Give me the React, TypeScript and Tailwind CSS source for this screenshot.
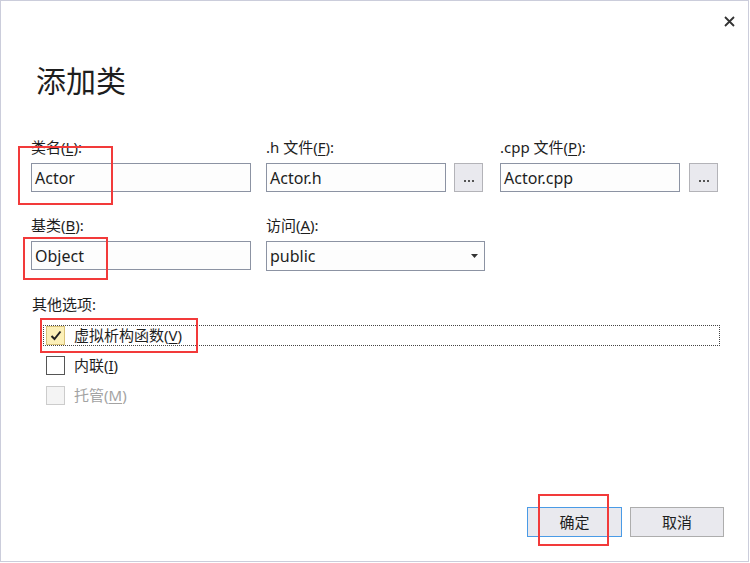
import React from "react";

const font = { fontFamily: '"Noto Sans", "Noto Sans CJK SC", sans-serif' };

function Label({ children }: { children: React.ReactNode }) {
  return <div className="h-[20px] leading-[20px] text-[15px] text-[#1e1e1e] mb-[6px] whitespace-nowrap">{children}</div>;
}

function Input({ value, w }: { value: string; w: string }) {
  return (
    <div className={`${w} h-[29px] border border-[#8c93a3] bg-[#fdfdfd] pl-[3px] flex items-center text-[16px] text-[#1e1e1e] leading-none`}>
      {value}
    </div>
  );
}

function Browse() {
  return (
    <div className="w-[29px] h-[29px] border border-[#b3b3b8] bg-[#e9e9ee] flex items-end justify-center pb-[9px] gap-[2px]">
      <span className="w-[2px] h-[2px] bg-[#555]" />
      <span className="w-[2px] h-[2px] bg-[#555]" />
      <span className="w-[2px] h-[2px] bg-[#555]" />
    </div>
  );
}

function U({ c }: { c: string }) {
  return <span className="underline underline-offset-2">{c}</span>;
}

export default function App() {
  return (
    <div className="w-[750px] h-[563px] bg-white" style={font}>
      <div className="relative w-[749px] h-[562px] border border-[#cbcddb] bg-white flex flex-col">
        <div className="flex justify-end pr-[13px] pt-[15px]">
          <svg width="11" height="11" viewBox="0 0 11 11">
            <path d="M1 1 L10 10 M10 1 L1 10" stroke="#333" strokeWidth="1.8" />
          </svg>
        </div>
        <div className="mt-[34px] pl-[35px] text-[30px] leading-[40px] text-[#1e1e1e]">添加类</div>

        <div className="mt-[36px] pl-[30px] grid grid-cols-[235px_234px_auto] gap-y-[23px]">
          <div>
            <Label>类名(<U c="L" />):</Label>
            <Input value="Actor" w="w-[220px]" />
          </div>
          <div>
            <Label>.h 文件(<U c="F" />):</Label>
            <div className="flex gap-[8px]">
              <Input value="Actor.h" w="w-[180px]" />
              <Browse />
            </div>
          </div>
          <div>
            <Label>.cpp 文件(<U c="P" />):</Label>
            <div className="flex gap-[9px]">
              <Input value="Actor.cpp" w="w-[180px]" />
              <Browse />
            </div>
          </div>
          <div>
            <Label>基类(<U c="B" />):</Label>
            <Input value="Object" w="w-[220px]" />
          </div>
          <div>
            <Label>访问(<U c="A" />):</Label>
            <div className="w-[219px] h-[30px] border border-[#8c93a3] bg-[#fdfdfd] pl-[3px] pr-[6px] flex items-center justify-between text-[16px] text-[#1e1e1e] leading-none">
              <span>public</span>
              <svg width="7" height="4" viewBox="0 0 7 4">
                <path d="M0 0 H7 L3.5 4 Z" fill="#333" />
              </svg>
            </div>
          </div>
          <div />
        </div>

        <div className="mt-[23px] pl-[31px] h-[20px] leading-[20px] text-[15px] text-[#1e1e1e]">其他选项:</div>

        <div className="mt-[11px] pl-[42px] flex flex-col gap-[9px]">
          <div className="w-[677px] h-[21px] border border-dotted border-[#444] pl-[2px] flex items-center">
            <div className="w-[19px] h-[19px] border border-[#d9c27a] bg-[#fcf0b8] flex items-center justify-center">
              <svg width="12" height="11" viewBox="0 0 12 11">
                <path d="M1.5 6 L4.5 9 L10.5 1.5" stroke="#222" strokeWidth="2" fill="none" />
              </svg>
            </div>
            <span className="ml-[9px] text-[15px] leading-none text-[#1e1e1e]">虚拟析构函数(<U c="V" />)</span>
          </div>
          <div className="w-[677px] h-[21px] border border-transparent pl-[2px] flex items-center">
            <div className="w-[19px] h-[19px] border border-[#555] bg-white" />
            <span className="ml-[9px] text-[15px] leading-none text-[#1e1e1e]">内联(<U c="I" />)</span>
          </div>
          <div className="w-[677px] h-[21px] border border-transparent pl-[2px] flex items-center">
            <div className="w-[19px] h-[19px] border border-[#cccccc] bg-[#f4f4f4]" />
            <span className="ml-[9px] text-[15px] leading-none text-[#a3a3a3]">托管(<U c="M" />)</span>
          </div>
        </div>

        <div className="mt-auto flex justify-end gap-[8px] pr-[24px] pb-[24px]">
          <div className="w-[95px] h-[30px] border border-[#4a9be6] bg-[#e9e9ee] flex items-center justify-center text-[15px] text-[#1e1e1e]">确定</div>
          <div className="w-[94px] h-[30px] border border-[#adadad] bg-[#e9e9ee] flex items-center justify-center text-[15px] text-[#1e1e1e]">取消</div>
        </div>

        <div className="absolute left-[17px] top-[145px] w-[95px] h-[59px] border-2 border-[#f23a3a]" />
        <div className="absolute left-[22px] top-[236px] w-[85px] h-[43px] border-2 border-[#f23a3a]" />
        <div className="absolute left-[39px] top-[317px] w-[158px] h-[35px] border-2 border-[#f23a3a]" />
        <div className="absolute left-[537px] top-[493px] w-[71px] h-[52px] border-2 border-[#f23a3a]" />
      </div>
    </div>
  );
}
